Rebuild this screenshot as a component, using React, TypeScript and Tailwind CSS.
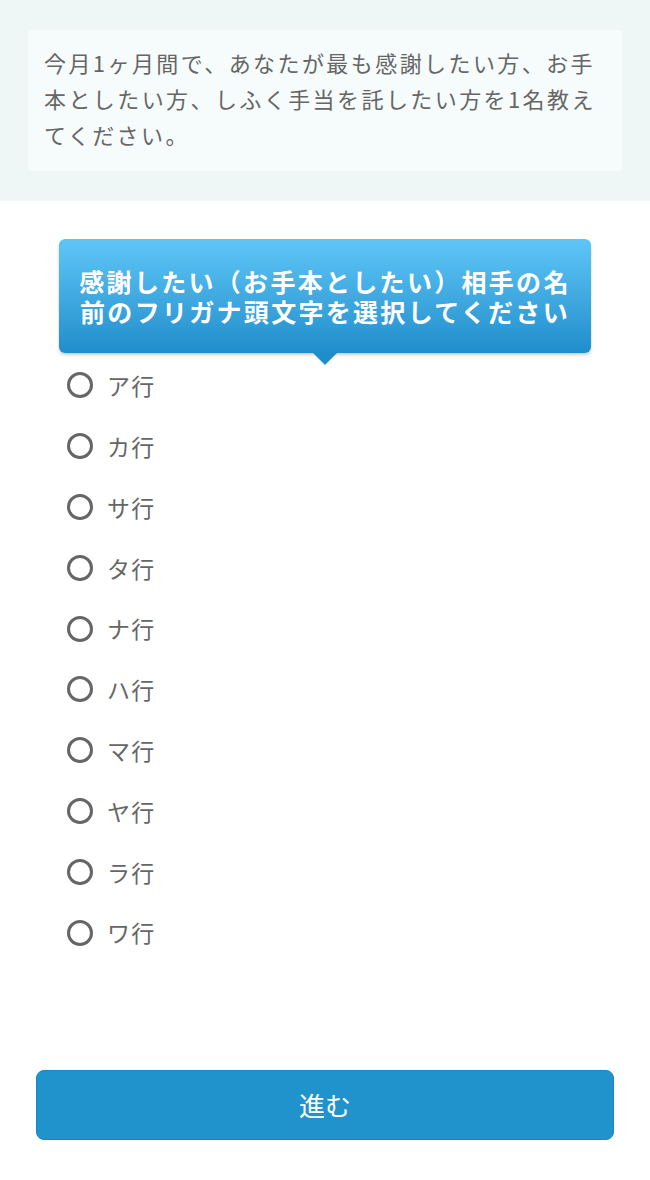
const ROWS = ['ア行', 'カ行', 'サ行', 'タ行', 'ナ行', 'ハ行', 'マ行', 'ヤ行', 'ラ行', 'ワ行']

export default function App() {
  return (
    <div className="min-h-[1180px] bg-white font-['Noto_Sans_CJK_JP','Noto_Sans',sans-serif] text-[#666]">
      {/* Question */}
      <div className="bg-[#eef7f6] px-[28px] pt-[30px] pb-[30px]">
        <div className="rounded-[4px] bg-[#f6fbfb] px-[16px] pt-[14px] pb-[19px]">
          <p className="text-[22px] leading-[36px] tracking-[0.11em]">
            今月1ヶ月間で、あなたが最も感謝したい方、お手本としたい方、しふく手当を託したい方を1名教えてください。
          </p>
        </div>
      </div>

      {/* Bubble */}
      <div className="px-[59px] pt-[38px]">
        <div className="relative rounded-[6px] bg-gradient-to-b from-[#5ec6f7] to-[#1e8ecb] px-[4px] py-[27px] text-center shadow-[0_2px_3px_rgba(0,0,0,0.2)]">
          <p className="text-[25px] leading-[30px] font-bold tracking-[2.3px] text-white">
            <span className="block">感謝したい（お手本としたい）相手の名</span>
            <span className="block">前のフリガナ頭文字を選択してください</span>
          </p>
          <div className="absolute left-1/2 -bottom-[12px] h-0 w-0 -translate-x-1/2 border-x-[12px] border-t-[12px] border-x-transparent border-t-[#1e8ecb]" />
        </div>
      </div>

      {/* Options */}
      <div className="flex flex-col px-[67px] pt-[2px]">
        {ROWS.map((r) => (
          <label key={r} className="flex h-[60.8px] items-center gap-[14px]">
            <span className="h-[26px] w-[26px] shrink-0 rounded-full border-[3px] border-[#666]" />
            <span className="text-[23px] tracking-[0.05em]">{r}</span>
          </label>
        ))}
      </div>

      {/* Submit */}
      <div className="px-[36px] pt-[107px] pb-[40px]">
        <button className="flex h-[70px] w-full items-center justify-center rounded-[8px] border border-[#1a86bf] bg-[#2093cc] text-[26px] text-white">
          進む
        </button>
      </div>
    </div>
  )
}
